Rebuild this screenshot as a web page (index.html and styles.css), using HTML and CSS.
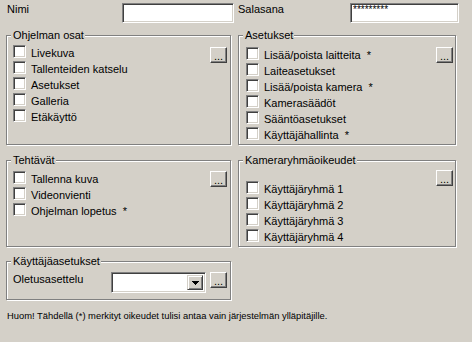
FILE: index.html
```html
<!DOCTYPE html>
<html lang="fi">

<head>
    <meta charset="UTF-8">
    <title>Käyttäjäoikeudet</title>
    <link rel="stylesheet" href="styles.css">
</head>

<body>
    <!-- käyttäjätunnus ja salasana -->
    <div class="login">
        <label class="login-label">Nimi</label>
        <input class="field field-name" type="text">
        <label class="login-label">Salasana</label>
        <input class="field field-pass" type="text" value="*********">
    </div>

    <div class="groups">
        <div class="group">
            <div class="group-title">Ohjelman osat</div>
            <div class="group-body">
                <ul class="checks">
                    <li><input type="checkbox">Livekuva</li>
                    <li><input type="checkbox">Tallenteiden katselu</li>
                    <li><input type="checkbox">Asetukset</li>
                    <li><input type="checkbox">Galleria</li>
                    <li><input type="checkbox">Etäkäyttö</li>
                </ul>
                <button class="more more-low">...</button>
            </div>
        </div>

        <div class="group group-right">
            <div class="group-title">Asetukset</div>
            <div class="group-body">
                <ul class="checks checks-low">
                    <li><input type="checkbox">Lisää/poista laitteita&nbsp;&nbsp;*</li>
                    <li><input type="checkbox">Laiteasetukset</li>
                    <li><input type="checkbox">Lisää/poista kamera&nbsp;&nbsp;*</li>
                    <li><input type="checkbox">Kamerasäädöt</li>
                    <li><input type="checkbox">Sääntöasetukset</li>
                    <li><input type="checkbox">Käyttäjähallinta&nbsp;&nbsp;*</li>
                </ul>
                <button class="more more-low">...</button>
            </div>
        </div>

        <div class="group">
            <div class="group-title">Tehtävät</div>
            <div class="group-body">
                <ul class="checks checks-mid">
                    <li><input type="checkbox">Tallenna kuva</li>
                    <li><input type="checkbox">Videonvienti</li>
                    <li><input type="checkbox">Ohjelman lopetus&nbsp;&nbsp;*</li>
                </ul>
                <button class="more more-mid">...</button>
            </div>
        </div>

        <div class="group group-right">
            <div class="group-title">Kameraryhmäoikeudet</div>
            <div class="group-body">
                <ul class="checks checks-deep">
                    <li><input type="checkbox">Käyttäjäryhmä 1</li>
                    <li><input type="checkbox">Käyttäjäryhmä 2</li>
                    <li><input type="checkbox">Käyttäjäryhmä 3</li>
                    <li><input type="checkbox">Käyttäjäryhmä 4</li>
                </ul>
                <button class="more">...</button>
            </div>
        </div>
    </div>

    <div class="group user-settings">
        <div class="group-title">Käyttäjäasetukset</div>
        <div class="group-body user-body">
            <span class="layout-label">Oletusasettelu</span>
            <div class="combo">
                <span class="combo-btn">
                    <svg width="7" height="4" viewBox="0 0 7 4"><path d="M0 0h7v1h-1v1h-1v1h-1v1h-1v-1h-1v-1h-1v-1h-1z" fill="#000"/></svg>
                </span>
            </div>
            <button class="more">...</button>
        </div>
    </div>

    <p class="note">Huom! Tähdellä (*) merkityt oikeudet tulisi antaa vain järjestelmän ylläpitäjille.</p>
</body>

</html>
```

FILE: styles.css
```css
/* perus: Windows-harmaa tausta */
body {
    margin: 0;
    height: 342px;
    background: #d4d0c8;
    font-family: "Liberation Sans", Arial, sans-serif;
    font-size: 11px;
    color: #000;
    overflow: hidden;
}

/* ylärivi */
.login {
    display: grid;
    grid-template-columns: 115px 116px 112px 109px;
    align-items: start;
    height: 35px;
    box-sizing: border-box;
    padding: 3px 0 0 7px;
}

.login-label {
    line-height: 13px;
}

/* upotettu kenttä */
.field {
    height: 20px;
    box-sizing: border-box;
    margin: 0;
    padding: 0 2px 8px;
    border: 1px solid;
    border-color: #808080 #fff #fff #808080;
    box-shadow: inset 1px 1px 0 #404040, inset -1px -1px 0 #d4d0c8;
    background: #fff;
    font: inherit;
    outline: none;
}

.field-name {
    width: 112px;
}

.field-pass {
    width: 109px;
    font-size: 10px;
}

/* ryhmälaatikot */
.groups {
    display: grid;
    grid-template-columns: 225px 218px;
    grid-template-rows: 110px 87px;
    column-gap: 7px;
    row-gap: 15px;
    padding-left: 6px;
}

.group {
    box-sizing: border-box;
    border: 1px solid #808080;
    box-shadow: inset 1px 1px 0 #fff, 1px 1px 0 #fff;
}

.group-title {
    display: table;
    margin: -7px 0 0 4px;
    padding: 0 1px 0 2px;
    line-height: 13px;
    background: #d4d0c8;
}

.group-body {
    display: flex;
    align-items: flex-start;
    padding: 3px 3px 0 6px;
}

.group-right .group-body {
    padding: 3px 2px 0 7px;
}

/* valintaruudut */
.checks {
    flex: 1;
    margin: 0;
    padding: 0;
    list-style: none;
}

.checks-low {
    margin-top: 2px;
}

.checks-mid {
    margin-top: 1px;
}

.checks-deep {
    margin-top: 11px;
}

.checks li {
    display: flex;
    height: 16px;
    line-height: 16px;
    white-space: nowrap;
}

.checks input {
    appearance: none;
    -webkit-appearance: none;
    flex-shrink: 0;
    width: 13px;
    height: 13px;
    margin: 0 5px 0 0;
    border: 1px solid;
    border-color: #808080 #fff #fff #808080;
    box-shadow: inset 1px 1px 0 #404040, inset -1px -1px 0 #d4d0c8;
    background: #fff;
}

/* "..." painike */
.more {
    flex-shrink: 0;
    width: 17px;
    height: 16px;
    box-sizing: border-box;
    margin: 0;
    padding: 1px 0 0;
    border: 1px solid;
    border-color: #fff #404040 #404040 #fff;
    box-shadow: inset -1px -1px 0 #808080;
    background: #d4d0c8;
    font-family: inherit;
    font-size: 11px;
    line-height: 12px;
    text-align: center;
    color: #000;
}

.more-low {
    margin-top: 2px;
}

.more-mid {
    margin-top: 1px;
}

/* käyttäjäasetukset */
.user-settings {
    width: 225px;
    height: 39px;
    margin: 14px 0 0 6px;
}

.user-body {
    padding-top: 4px;
}

.layout-label {
    width: 98px;
    line-height: 13px;
    margin-top: 1px;
}

.combo {
    display: flex;
    justify-content: flex-end;
    width: 95px;
    height: 21px;
    box-sizing: border-box;
    padding: 2px;
    border: 1px solid;
    border-color: #808080 #fff #fff #808080;
    box-shadow: inset 1px 1px 0 #404040, inset -1px -1px 0 #d4d0c8;
    background: #fff;
}

.combo-btn {
    display: flex;
    align-items: center;
    justify-content: center;
    width: 16px;
    height: 15px;
    box-sizing: border-box;
    border: 1px solid;
    border-color: #d4d0c8 #404040 #404040 #d4d0c8;
    box-shadow: inset 1px 1px 0 #fff, inset -1px -1px 0 #808080;
    background: #d4d0c8;
}

.user-body .more {
    margin-left: 4px;
}

/* huomautus */
.note {
    margin: 10px 0 0 7px;
    font-size: 9.4px;
    line-height: 12px;
}
```
